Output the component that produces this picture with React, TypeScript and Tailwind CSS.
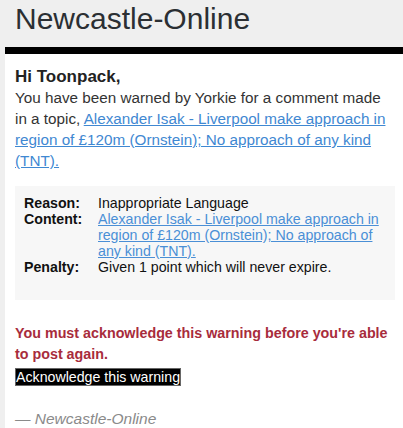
import React from "react";

export default function App() {
  const font = { fontFamily: '"Liberation Sans", Arial, sans-serif' };
  return (
    <div className="min-h-screen bg-[#efefef]" style={font}>
      <div className="pl-[15px] h-[47px] text-[30px] leading-[38px] text-[#2b2f33] whitespace-nowrap">
        Newcastle-Online
      </div>
      <div className="ml-[5px] bg-white border-t-[7px] border-black pl-[10px] pr-[8px] pt-[12px] pb-[10px]">
        <div className="text-[17px] leading-[21px] font-bold text-[#222]">Hi Toonpack,</div>
        <p className="text-[15.25px] leading-[21px] text-[#333]">
          You have been warned by Yorkie for a comment made in a topic,{" "}
          <a href="#" className="text-[#3f88d2] underline">
            Alexander Isak - Liverpool make approach in region of £120m (Ornstein); No approach of any kind (TNT).
          </a>
        </p>
        <div className="mt-[15px] bg-[#f7f7f7] pt-[9px] pb-[25px] pl-[9px] pr-[9px] text-[14.2px] leading-[16px] text-[#111]">
          <div className="grid grid-cols-[74px_1fr]">
            <div className="font-bold">Reason:</div>
            <div>Inappropriate Language</div>
            <div className="font-bold">Content:</div>
            <div>
              <a href="#" className="text-[#4a8fd6] underline">
                Alexander Isak - Liverpool make approach in region of £120m (Ornstein); No approach of any kind (TNT).
              </a>
            </div>
            <div className="font-bold">Penalty:</div>
            <div>Given 1 point which will never expire.</div>
          </div>
        </div>
        <p className="mt-[23px] -mr-[8px] text-[14.3px] leading-[21px] font-bold text-[#a82c3c]">
          You must acknowledge this warning before you're able to post again.
        </p>
        <div>
          <button className="bg-black text-white text-[14.2px] leading-[16px] border border-[#666] px-0 py-0" style={font}>
            Acknowledge this warning
          </button>
        </div>
        <p className="mt-[19px] text-[15.5px] leading-[21px] italic text-[#8a8a8a]">— Newcastle-Online</p>
      </div>
    </div>
  );
}
